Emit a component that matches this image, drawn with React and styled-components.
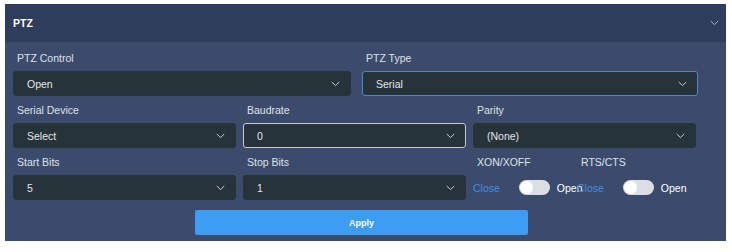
import React, { useState } from 'react';
import styled, { createGlobalStyle } from 'styled-components';

const GlobalStyle = createGlobalStyle`
    body {
        margin: 0;
        background: #ffffff;
        font-family: "Liberation Sans", Arial, sans-serif;
    }
`

function Chevron({ color = '#c9ced8' }) {
    return (
        <svg width="9" height="6" viewBox="0 0 9 6">
            <polyline points="0.8,1 4.5,4.6 8.2,1" fill="none" stroke={color} strokeWidth="1" />
        </svg>
    )
}

function Select({ value, border }) {
    return (
        <SelectBox border={border}>
            <span>{value}</span>
            <Chevron />
        </SelectBox>
    )
}

function Toggle() {
    const [on, setOn] = useState(false);
    return (
        <ToggleItem>
            <ToggleText>Close</ToggleText>
            <Track onClick={() => setOn(!on)}>
                <Knob on={on} />
            </Track>
            <ToggleText white>Open</ToggleText>
        </ToggleItem>
    )
}

function App() {
    return (
        <>
            <GlobalStyle />
            <Panel>
                <Header>
                    <Title>PTZ</Title>
                    <Chevron color="#aab2c4" />
                </Header>
                <Body>
                    <Row wide>
                        <Field>
                            <Label>PTZ Control</Label>
                            <Select value="Open" />
                        </Field>
                        <Field>
                            <Label>PTZ Type</Label>
                            <Select value="Serial" border="#4f86c6" />
                        </Field>
                    </Row>
                    <Row>
                        <Field>
                            <Label>Serial Device</Label>
                            <Select value="Select" />
                        </Field>
                        <Field>
                            <Label>Baudrate</Label>
                            <Select value="0" border="#c4c9d2" />
                        </Field>
                        <Field>
                            <Label>Parity</Label>
                            <Select value="(None)" />
                        </Field>
                    </Row>
                    <Row>
                        <Field>
                            <Label>Start Bits</Label>
                            <Select value="5" />
                        </Field>
                        <Field>
                            <Label>Stop Bits</Label>
                            <Select value="1" />
                        </Field>
                        <FlowGroup>
                            <FlowCol>
                                <Label>XON/XOFF</Label>
                                <Toggle />
                            </FlowCol>
                            <FlowCol>
                                <Label>RTS/CTS</Label>
                                <Toggle />
                            </FlowCol>
                        </FlowGroup>
                    </Row>
                    <ButtonRow>
                        <ApplyButton>Apply</ApplyButton>
                    </ButtonRow>
                </Body>
            </Panel>
        </>
    )
}

const Panel = styled.div`
    margin: 4px 0 0 5px;
    width: 721px;
    background: #3c4b6c;
    box-shadow: 0 2px 0 #1c2435;
`

const Header = styled.div`
    height: 38px;
    display: flex;
    align-items: center;
    justify-content: space-between;
    padding: 0 7px 0 8px;
    background: #2f3d5d;
`

const Title = styled.div`
    color: #ffffff;
    font-weight: bold;
    font-size: 10.5px;
`

const Body = styled.div`
    padding: 3px 0 6px 8px;
    display: flex;
    flex-direction: column;
    gap: 1px;
`

const Row = styled.div`
    display: grid;
    grid-template-columns: ${props => props.wide ? '338px 336px' : '223px 223px 223px'};
    column-gap: ${props => props.wide ? '11px' : '7px'};
`

const Field = styled.div`
    display: flex;
    flex-direction: column;
`

const Label = styled.div`
    height: 26px;
    line-height: 26px;
    padding-left: 4px;
    color: #dde2ea;
    font-size: 10.5px;
    white-space: nowrap;
`

const SelectBox = styled.div`
    height: 25px;
    box-sizing: border-box;
    display: flex;
    align-items: center;
    justify-content: space-between;
    padding: 0 10px 0 13px;
    background: #26333a;
    border: 1px solid ${props => props.border || '#26333a'};
    border-radius: 3px;
    color: #e4e7ec;
    font-size: 10.5px;
`

const FlowGroup = styled.div`
    display: flex;
`

const FlowCol = styled.div`
    width: 104px;
    display: flex;
    flex-direction: column;
`

const ToggleItem = styled.div`
    height: 25px;
    display: flex;
    align-items: center;
    white-space: nowrap;
`

const ToggleText = styled.span`
    font-size: 10.5px;
    color: ${props => props.white ? '#ffffff' : '#3f8fe0'};
    margin-left: ${props => props.white ? '7px' : '0'};
`

const Track = styled.div`
    margin-left: 19px;
    width: 31px;
    height: 15px;
    flex: none;
    border-radius: 8px;
    background: #dcdfe4;
    position: relative;
    cursor: pointer;
`

const Knob = styled.div`
    position: absolute;
    top: 1px;
    left: ${props => props.on ? '17px' : '1px'};
    width: 13px;
    height: 13px;
    border-radius: 50%;
    background: #ffffff;
`

const ButtonRow = styled.div`
    padding: 9px 0 0 182px;
`

const ApplyButton = styled.button`
    width: 333px;
    height: 25px;
    border: none;
    border-radius: 2px;
    background: #3d9df5;
    color: #ffffff;
    font-family: "Liberation Sans", Arial, sans-serif;
    font-size: 9px;
    font-weight: bold;
    cursor: pointer;
`

export default App
